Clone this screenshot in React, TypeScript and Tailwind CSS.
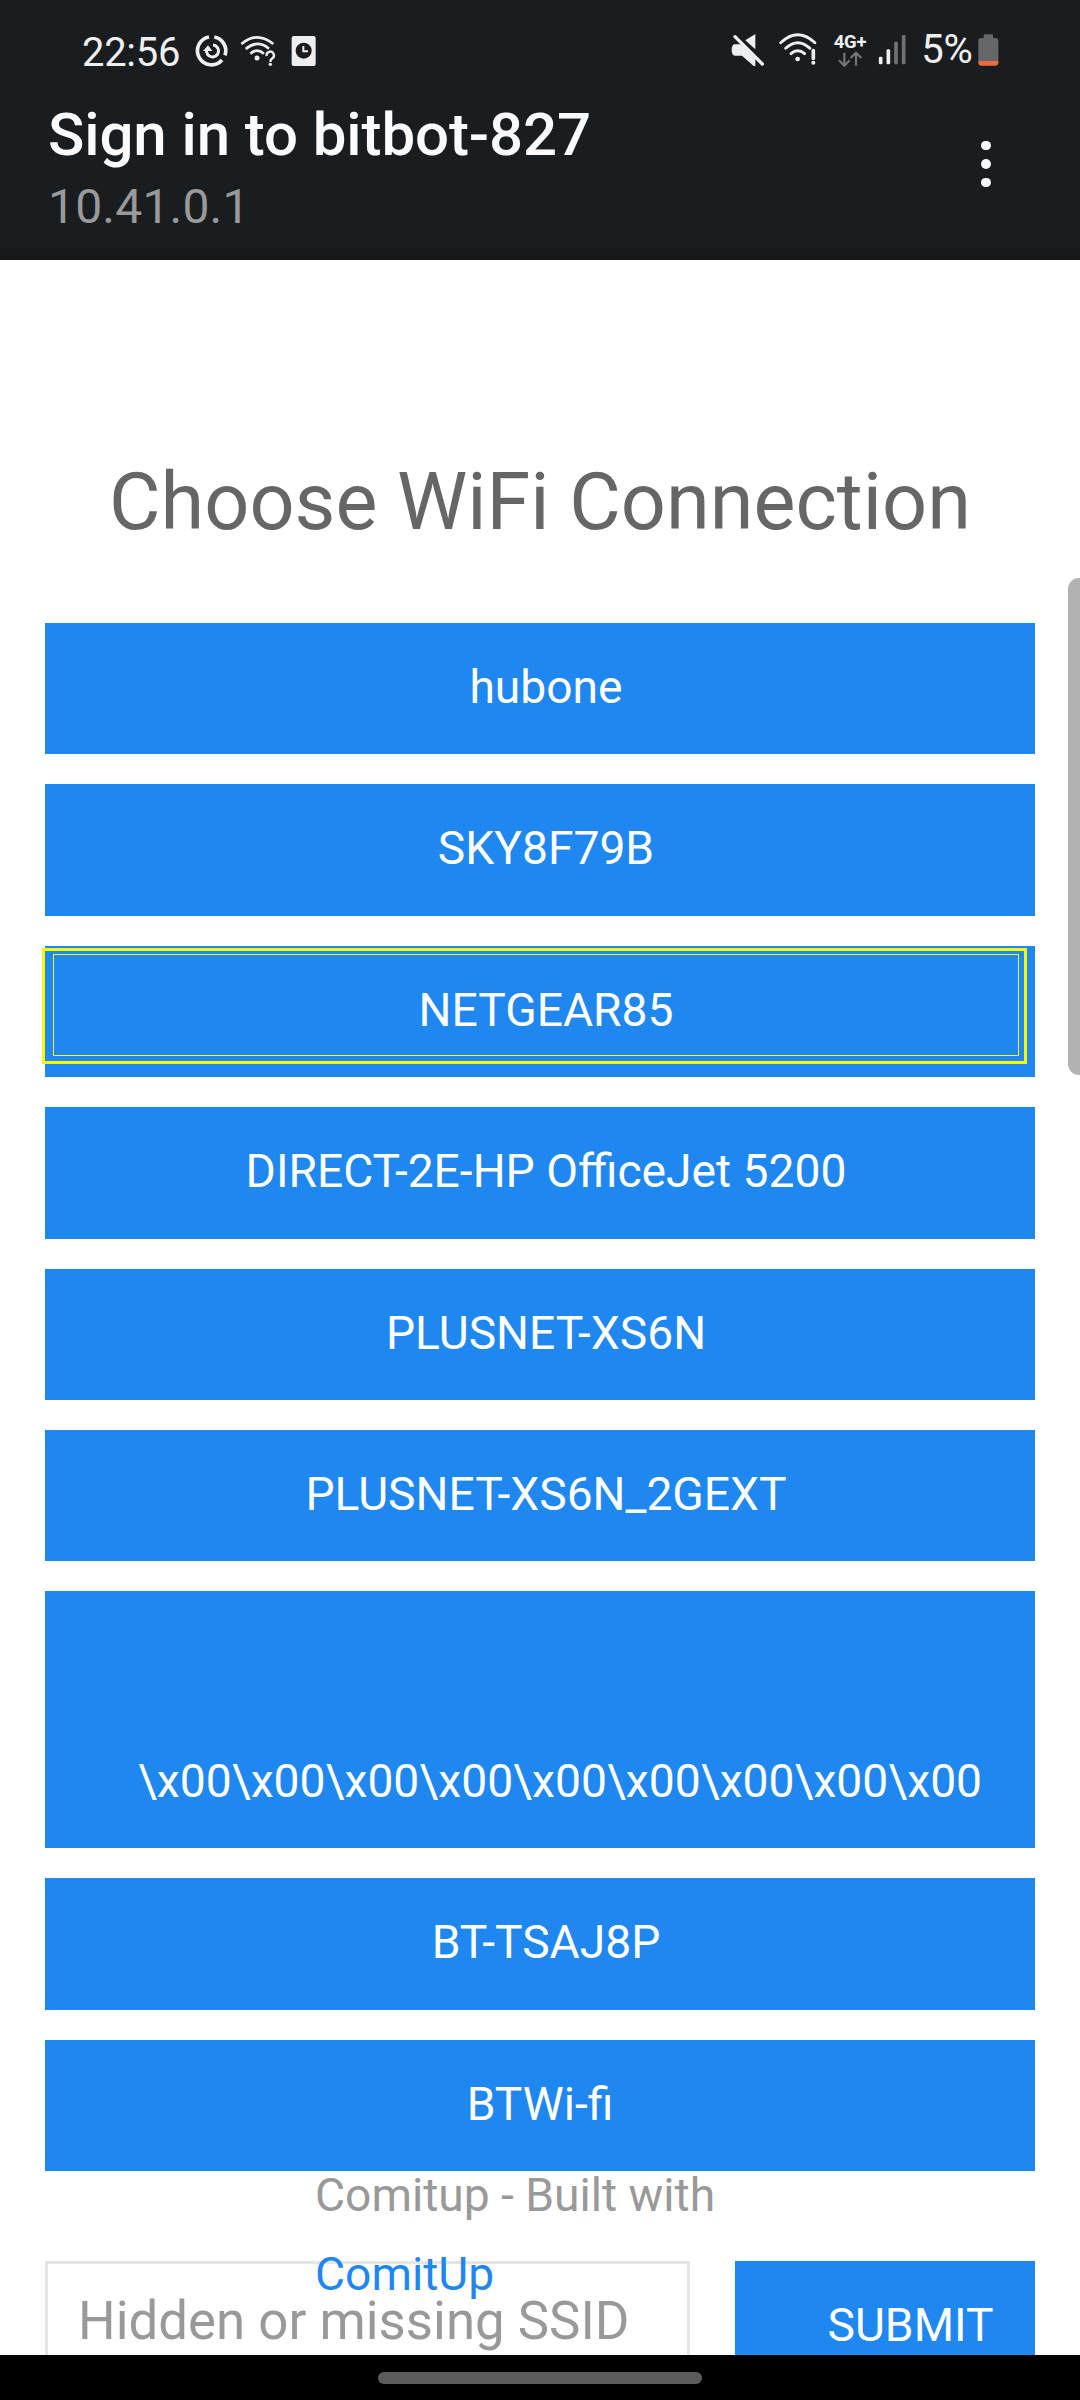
import React from "react";

const INK = "#efefef";
const BAR = "#191d1f";

function StatusBar() {
  return (
    <div className="flex h-[100px] w-full items-start pl-[82px] pr-20 text-[40px] leading-none tracking-[-0.3px] text-[#efefef]">
      <span className="w-[111.33px] shrink-0 pt-[33px]">22:56</span>

      {/* Data saver */}
      <svg className="h-[100px] w-10 shrink-0" viewBox="580 0 120 300" fill="none" stroke={INK}>
        <path d="M644 111 A42 42 0 0 1 676 166" strokeWidth="11" />
        <path d="M667 180 A42 42 0 1 1 628 111" strokeWidth="11" />
        <path d="M640 135 A18 18 0 1 1 621 149" strokeWidth="9" />
        <path d="M610 153 L625 136 L638 153 Z" fill={INK} stroke="none" />
      </svg>

      {/* Wi-Fi without known internet access */}
      <svg className="h-[100px] w-[50px] shrink-0" viewBox="700 0 150 300" fill="none" stroke={INK} strokeWidth="8">
        <path d="M725 132 Q772 92 821 132" />
        <path d="M738 147 Q773 117 808 146" />
        <path d="M752 161 Q772 143 793 161" />
        <circle cx="772" cy="174" r="7.500" fill={INK} stroke="none" />
        <path d="M801 168 A11 11 0 1 1 818 175 Q812 178 812 186" strokeWidth="7" />
        <circle cx="812" cy="193" r="5" fill={INK} stroke="none" />
      </svg>

      {/* Clock app */}
      <svg className="h-[100px] w-[37px] shrink-0" viewBox="850 0 111 300">
        <rect x="876" y="108" width="72" height="90" rx="6" fill={INK} />
        <circle cx="912" cy="152" r="24" fill={BAR} />
        <path d="M911 138 V153.500 H925" fill="none" stroke={INK} strokeWidth="6" />
      </svg>

      <div className="ml-auto flex shrink-0 items-start">
        {/* Sound off */}
        <svg className="h-[100px] w-[43.33px] shrink-0" viewBox="140 0 130 300">
          <path d="M225 102 V148 L195 121 Z" fill={INK} />
          <path d="M164 133 H182 L225 177 V198 H220 L185 167 H164 Q154 167 154 150 Q154 133 164 133 Z" fill={INK} />
          <path d="M164 110 L246 192" stroke={INK} strokeWidth="10" strokeLinecap="round" />
          <path d="M174 107 L255 188" stroke={BAR} strokeWidth="5" />
        </svg>

        {/* Wi-Fi with warning */}
        <svg className="h-[100px] w-[56.67px] shrink-0" viewBox="270 0 170 300" fill="none" stroke={INK} strokeWidth="8.500" strokeLinecap="round">
          <path d="M302 128 Q353 80 405 128" />
          <path d="M317 145 Q353 111 390 145" />
          <path d="M333 161 Q353 144 374 161" />
          <circle cx="353" cy="177" r="7" fill={INK} stroke="none" />
          <path d="M400 152 V175" strokeWidth="11" />
          <circle cx="400" cy="188" r="6" fill={INK} stroke="none" />
        </svg>

        {/* Mobile data */}
        <div className="relative h-[100px] w-[46.67px] shrink-0">
          <span className="absolute left-[7px] top-[33px] text-[18.5px] font-bold leading-none tracking-[-0.2px]">4G+</span>
          <svg className="h-[100px] w-[46.67px]" viewBox="440 0 140 300" fill="none" stroke="#747678" strokeWidth="6.500">
            <path d="M492 158 V196 M476 181 L492 197 L508 181" />
            <path d="M527 197 V159 M511 174 L527 158 L543 174" />
          </svg>
        </div>

        {/* Signal strength */}
        <svg className="h-[100px] w-10 shrink-0" viewBox="580 0 120 300">
          <rect x="597.500" y="170" width="11" height="23" rx="4" fill={INK} />
          <rect x="620.500" y="148" width="11" height="45" rx="4" fill={INK} />
          <rect x="643.500" y="125" width="11" height="68" rx="4" fill="#707274" />
          <rect x="666.500" y="105" width="11" height="88" rx="4" fill="#707274" />
        </svg>

        <span className="w-[63.33px] shrink-0 pl-[8px] pt-[30px]">5%</span>

        {/* Battery */}
        <svg className="h-[100px] w-[23.33px] shrink-0" viewBox="890 0 70 300">
          <path d="M914 103 H934 Q938 103 938 107 V114 H946 Q954 114 954 122 V183 H894 V122 Q894 114 902 114 H910 V107 Q910 103 914 103 Z" fill="#666769" />
          <path d="M894 183 H954 V188 Q954 197 945 197 H903 Q894 197 894 188 Z" fill="#f26b3a" />
        </svg>
      </div>
    </div>
  );
}

type NetworkProps = { name: string; focused?: boolean; centered?: boolean };

function Network({ name, focused = false, centered = false }: NetworkProps) {
  return (
    <button
      className={`relative flex h-[131.38px] w-full shrink-0 items-center justify-center bg-[#1f87f0] pb-[3px] text-[46.2px] leading-none text-white ${centered ? "pl-0" : "pl-3"}`}
    >
      {name}
      {focused && (
        <span className="absolute -left-[3px] top-[2.2px] h-[116px] w-[985px] border-[3px] border-[#fff500]">
          <span className="absolute left-2 top-[3px] h-[102px] w-[966px] border border-[#fff500]" />
        </span>
      )}
    </button>
  );
}

export default function App() {
  return (
    <div className="relative flex h-[2400px] w-[1080px] flex-col overflow-hidden bg-white font-[Roboto,sans-serif]">
      <header className="flex h-[260px] shrink-0 flex-col border-b-[12px] border-[#171717] bg-[#191d1f]">
        <StatusBar />
        <div className="flex justify-between pl-12">
          <div>
            <h1 className="pt-[5px] text-[60px] font-medium leading-none tracking-[-0.1px] text-[#fafafa]">Sign in to bitbot-827</h1>
            <p className="pt-[18px] text-[48px] leading-none tracking-[0.2px] text-[#999999]">10.41.0.1</p>
          </div>
          <div className="mr-[89.500px] flex flex-col gap-[9.330px] pt-[40.670px]">
            <i className="size-[9.330px] rounded-full bg-[#fafafa]" />
            <i className="size-[9.330px] rounded-full bg-[#fafafa]" />
            <i className="size-[9.330px] rounded-full bg-[#fafafa]" />
          </div>
        </div>
      </header>

      <main className="relative flex h-[2095px] shrink-0 flex-col overflow-hidden px-[45px]">
        <h2 className="mb-[81px] mt-[202px] h-20 text-center text-[79.2px] leading-[80px] text-[#666666]">Choose WiFi Connection</h2>
        <div className="flex flex-col gap-[30px]">
          <Network name="hubone" />
          <Network name="SKY8F79B" />
          <Network name="NETGEAR85" focused />
          <Network name="DIRECT-2E-HP OfficeJet 5200" />
          <Network name="PLUSNET-XS6N" />
          <Network name="PLUSNET-XS6N_2GEXT" />
          <button className="flex h-[257px] shrink-0 items-end justify-center bg-[#1f87f0] pb-[44px] pl-[40px] text-[46.2px] leading-none text-white">
            {"\\x00".repeat(9)}
          </button>
          <Network name="BT-TSAJ8P" />
          <Network name="BTWi-fi" centered />
        </div>
        <div className="mt-[90px] flex shrink-0 justify-between">
          <div className="h-[140px] w-[645px] border-[3px] border-[#e5e5e5] pl-[30px] pt-[31px] text-[52.8px] leading-none text-[#999999]">
            Hidden or missing SSID
          </div>
          <div className="h-[140px] w-[300px] bg-[#1f87f0] pl-[92.500px] pt-[41px] text-[46.2px] leading-none text-white">SUBMIT</div>
        </div>

        {/* Footer drawn over the form */}
        <footer className="absolute left-[315px] top-[1896px] text-[46.2px] leading-[79px] text-[#999999]">
          <p>Comitup - Built with</p>
          <p className="text-[#1f87f0]">ComitUp</p>
        </footer>
        <div className="absolute right-0 top-[318px] h-[497px] w-[12.500px] rounded-l-[11px] bg-[#b2b2b2]" />
      </main>

      <nav className="flex h-[45px] shrink-0 justify-center bg-black pt-[17px]">
        <div className="h-3 w-[324px] rounded-full bg-[#5c5c5c]" />
      </nav>
    </div>
  );
}
